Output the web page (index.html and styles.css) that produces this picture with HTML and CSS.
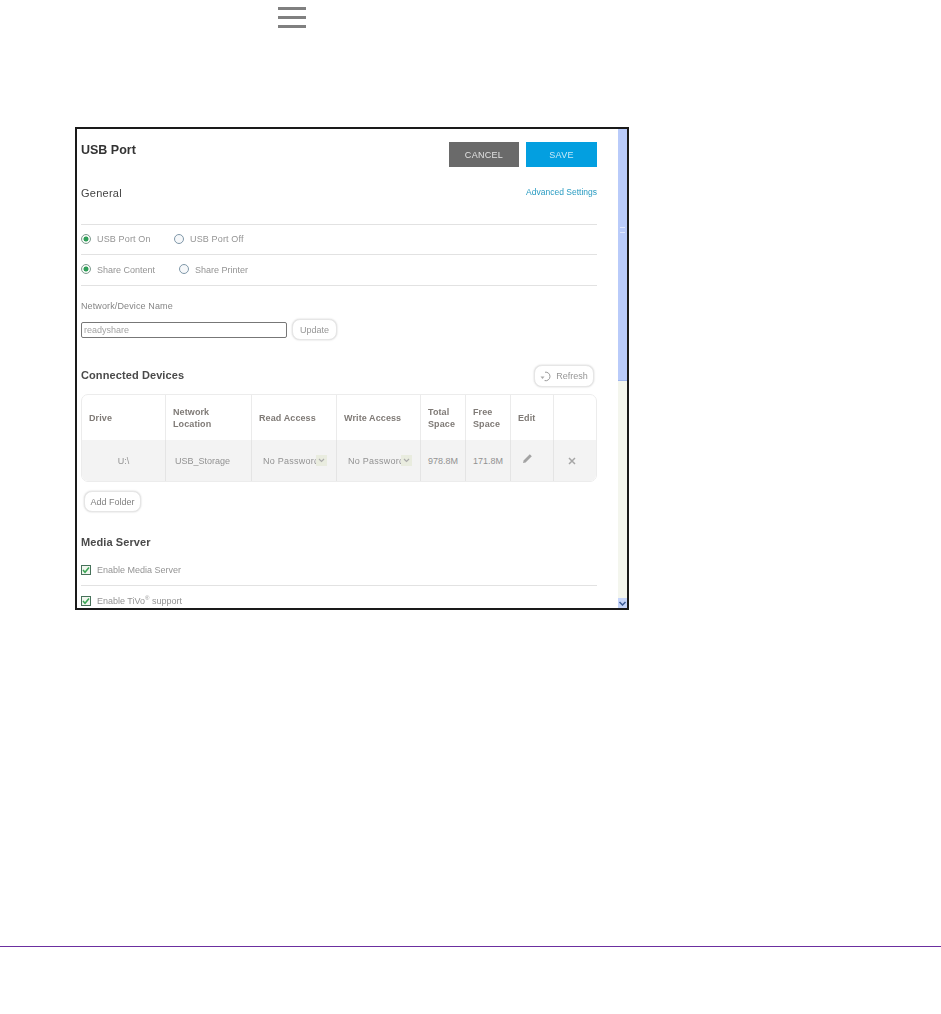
FILE: index.html
```html
<!DOCTYPE html>
<html lang="en">
<head>
<meta charset="utf-8">
<title>USB Port</title>
<link rel="stylesheet" href="styles.css">
</head>
<body>
<div class="top">
  <svg class="menu" width="30" height="23" viewBox="0 0 30 23"><path d="M1 2.500h28M1 11.500h28M1 20.500h28" stroke="#808080" stroke-width="3" fill="none"/></svg>
</div>
<main class="frame">
  <div class="content">
    <div class="head">
      <h1 class="title">USB Port</h1>
      <div class="actions">
        <span class="btn cancel">CANCEL</span>
        <span class="btn save">SAVE</span>
      </div>
    </div>
    <div class="general">
      <h2 class="sub">General</h2>
      <a class="adv">Advanced Settings</a>
    </div>
    <div class="opt first">
      <span class="radio on"></span><span class="lbl w1">USB Port On</span>
      <span class="radio"></span><span class="lbl">USB Port Off</span>
    </div>
    <div class="opt second">
      <span class="radio on"></span><span class="lbl w2">Share Content</span>
      <span class="radio"></span><span class="lbl">Share Printer</span>
    </div>
    <div class="netlabel">Network/Device Name</div>
    <div class="netrow">
      <span class="input">readyshare</span>
      <span class="pill update">Update</span>
    </div>
    <div class="devhead">
      <h2 class="sec">Connected Devices</h2>
      <span class="pill refresh">
        <svg width="13" height="11" viewBox="0 0 13 11"><path d="M5 1.200A4.300 4.300 0 1 1 4.600 9.600" stroke="#999" stroke-width="1" fill="none"/><path d="M0.500 5.500h4l-2 2.400z" fill="#aaa"/></svg>
        Refresh
      </span>
    </div>
    <div class="table">
      <div class="th">Drive</div>
      <div class="th">Network<br>Location</div>
      <div class="th">Read Access</div>
      <div class="th">Write Access</div>
      <div class="th">Total<br>Space</div>
      <div class="th">Free<br>Space</div>
      <div class="th">Edit</div>
      <div class="th"></div>
      <div class="td mid">U:\</div>
      <div class="td">USB_Storage</div>
      <div class="td pick"><span class="sel"><span class="seltxt">No Password</span><span class="selbtn"><svg width="7" height="5" viewBox="0 0 7 5"><path d="M1 1l2.500 2.500L6 1" stroke="#aaa" stroke-width="1.200" fill="none"/></svg></span></span></div>
      <div class="td pick"><span class="sel"><span class="seltxt">No Password</span><span class="selbtn"><svg width="7" height="5" viewBox="0 0 7 5"><path d="M1 1l2.500 2.500L6 1" stroke="#aaa" stroke-width="1.200" fill="none"/></svg></span></span></div>
      <div class="td size">978.8M</div>
      <div class="td size">171.8M</div>
      <div class="td icon"><svg width="11" height="11" viewBox="0 0 11 11"><path d="M1 10l.6-2.600L7.800 1.200l2 2L3.600 9.400z" fill="#a3a3a3"/></svg></div>
      <div class="td close"><svg width="8" height="8" viewBox="0 0 8 8"><path d="M1 1l6 6M7 1L1 7" stroke="#a6a6a6" stroke-width="1.500"/></svg></div>
    </div>
    <span class="pill add">Add Folder</span>
    <h2 class="sec media">Media Server</h2>
    <div class="chk first-chk">
      <span class="box"><svg width="8" height="8" viewBox="0 0 8 8"><path d="M1 4l2 2.200L7 1.500" stroke="#3aa655" stroke-width="1.600" fill="none"/></svg></span>
      <span class="lbl">Enable Media Server</span>
    </div>
    <div class="chk">
      <span class="box"><svg width="8" height="8" viewBox="0 0 8 8"><path d="M1 4l2 2.200L7 1.500" stroke="#3aa655" stroke-width="1.600" fill="none"/></svg></span>
      <span class="lbl">Enable TiVo<sup>®</sup> support</span>
    </div>
  </div>
  <div class="scroll">
    <div class="thumb"><span class="grip"></span></div>
    <div class="track"></div>
    <div class="down"><svg width="7" height="5" viewBox="0 0 7 5"><path d="M.5 1L3.500 4L6.500 1" stroke="#3a5a94" stroke-width="1.500" fill="none"/></svg></div>
  </div>
</main>
<div class="foot"></div>
</body>
</html>
```
FILE: styles.css
```css
html, body { margin: 0; padding: 0; background: #fff; }
body { height: 1014px; overflow: hidden; font-family: "Liberation Sans", Arial, sans-serif; color: #8a8a8a; font-size: 9px; }

.top { height: 127px; padding-left: 277px; box-sizing: border-box; padding-top: 6px; }
.menu { display: block; filter: blur(0.7px); }

.frame { margin-left: 75px; width: 554px; height: 483px; box-sizing: border-box; border: 2px solid #1a1a1a; display: flex; overflow: hidden; background: #fff; }
.content { width: 541px; box-sizing: border-box; padding: 0 21px 0 4px; filter: blur(0.4px); flex: none; overflow: hidden; }

.head { display: flex; justify-content: space-between; padding-top: 13px; height: 38px; box-sizing: border-box; }
.title { margin: 1px 0 0; font-size: 12.500px; font-weight: bold; color: #333; line-height: 14px; }
.actions { display: flex; gap: 7px; }
.btn { width: 70px; height: 25px; display: flex; align-items: center; justify-content: center; color: #e2e2e2; font-size: 9px; letter-spacing: .3px; }
.cancel { background: #6a6a6a; }
.save { width: 71px; background: #039fe0; color: #c8eaf8; }

.general { display: flex; justify-content: space-between; align-items: flex-start; height: 58px; box-sizing: border-box; padding-top: 20px; border-bottom: 1px solid #e2e2e2; }
.sub { margin: 0; font-size: 11px; font-weight: normal; color: #444; line-height: 13px; letter-spacing: .25px; }
.adv { font-size: 8.500px; color: #2a9cc2; line-height: 10px; }

.opt { display: flex; align-items: center; border-bottom: 1px solid #e2e2e2; box-sizing: border-box; }
.first { height: 30px; }
.second { height: 31px; }
.radio { width: 10px; height: 10px; box-sizing: border-box; border-radius: 50%; border: 1px solid #7f97a8; margin: -2px 6px 0 0; flex: none; background: #f6f8fa; }
.radio.on { background: radial-gradient(circle, #2f9e58 0 2.200px, #f4f8f4 2.800px); border-color: #7f9c8f; }
.lbl { font-size: 9px; line-height: 11px; color: #949494; }
.first .lbl { letter-spacing: .15px; }
.w1 { width: 77px; }
.w2 { width: 82px; }
.lbl sup { font-size: 6px; line-height: 0; }

.netlabel { margin-top: 15px; line-height: 11px; color: #858585; letter-spacing: .12px; }
.netrow { display: flex; align-items: center; gap: 5px; margin-top: 7px; height: 21px; }
.input { width: 206px; height: 16px; box-sizing: border-box; border: 1px solid #777; border-radius: 2px; padding-left: 2px; line-height: 14px; color: #a3a3a3; }
.pill { display: inline-flex; align-items: center; justify-content: center; background: #fff; border: 1px solid #e6e6e6; border-radius: 8px; box-shadow: 0 0 2px #ccc; box-sizing: border-box; color: #969696; }
.update { width: 45px; height: 21px; }

.devhead { display: flex; justify-content: space-between; align-items: center; margin-top: 25px; height: 22px; }
.sec { margin: 0 0 2px; font-size: 11px; font-weight: bold; color: #4a4a4a; line-height: 13px; letter-spacing: .1px; }
.refresh { width: 60px; height: 22px; gap: 3px; margin-right: 3px; }

.table { display: grid; grid-template-columns: 84px 86px 85px 84px 45px 45px 43px 44px; grid-template-rows: 45px 41px; margin-top: 7px; border: 1px solid #ececec; border-radius: 7px; overflow: hidden; width: 516px; box-sizing: border-box; }
.th { display: flex; align-items: center; padding-left: 7px; font-weight: bold; font-size: 9px; line-height: 12px; color: #7f7a76; letter-spacing: .1px; border-right: 1px solid #ebebeb; }
.td { display: flex; align-items: center; padding-left: 9px; background: #f3f3f3; border-right: 1px solid #e4e4e4; color: #929292; }
.th:nth-child(8), .td:last-child { border-right: 0; }
.mid { justify-content: center; padding-left: 0; }
.size { padding-left: 7px; }
.pick { padding-left: 11px; }
.icon { padding-left: 11px; padding-bottom: 4px; }
.close { padding-left: 14px; }
.sel { display: flex; align-items: center; width: 64px; }
.seltxt { width: 53px; overflow: hidden; white-space: nowrap; flex: none; letter-spacing: .25px; }
.selbtn { width: 11px; height: 11px; background: #e9ecdf; display: flex; align-items: center; justify-content: center; flex: none; }

.add { width: 57px; height: 21px; margin: 9px 0 0 3px; display: flex; color: #808080; }
.media { margin-top: 24px; }
.chk { display: flex; align-items: center; height: 30px; gap: 6px; }
.first-chk { border-bottom: 1px solid #e2e2e2; margin-top: 7px; height: 29px; }
.box { width: 10px; height: 10px; box-sizing: border-box; border: 1px solid #47715a; background: #f1f6ef; display: flex; align-items: center; justify-content: center; margin-top: 0; }
.first-chk .box { margin-top: -2px; }

.scroll { width: 9px; display: flex; flex-direction: column; flex: none; }
.thumb { height: 252px; background: #b9cbfa; display: flex; align-items: center; justify-content: center; border-bottom: 1px solid #9db4ee; box-sizing: border-box; }
.grip { width: 5px; height: 4px; border-top: 1px solid #dfe7fd; border-bottom: 1px solid #dfe7fd; margin-top: -50px; }
.track { flex: 1; background: #f4f6ee; }
.down { height: 10px; background: #c6d5fa; display: flex; align-items: center; justify-content: center; }

.foot { margin-top: 336px; height: 1px; background: #6b2fa0; }
```
